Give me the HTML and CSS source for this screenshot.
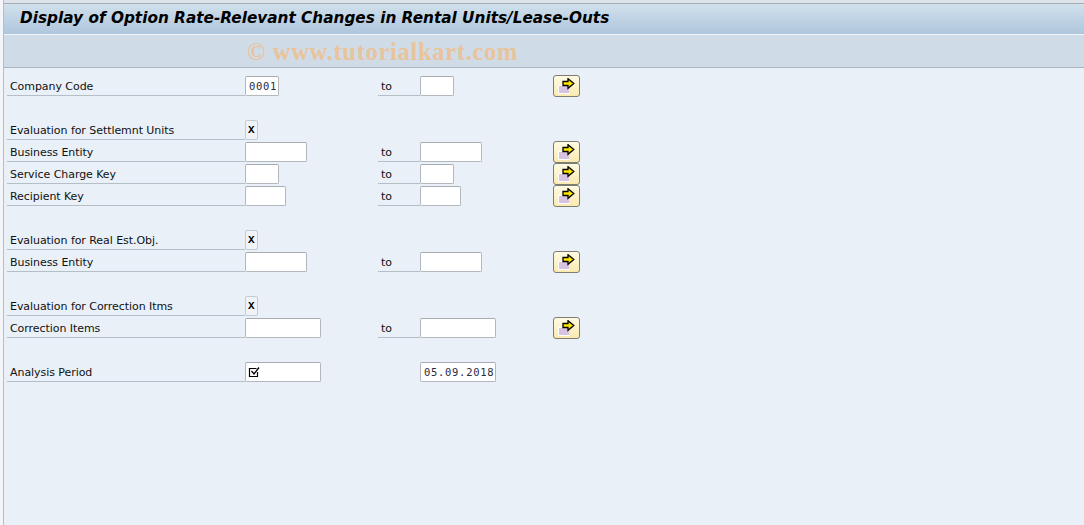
FILE: index.html
```html
<!DOCTYPE html>
<html lang="en">
<head>
  <meta charset="utf-8">
  <title>Display of Option Rate-Relevant Changes</title>
  <link rel="stylesheet" href="styles.css">
</head>
<body>
<svg class="defs" width="0" height="0">
  <symbol id="multi" viewBox="0 0 18 16">
    <rect x="0" y="7" width="12" height="9" fill="#fff"/>
    <rect x="1" y="8" width="10.500" height="7" fill="#d8c4e0"/>
    <path d="M5 3.500h5V.7l5.800 4.800L10 10.300V7.500H5z" fill="#ffe800" stroke="#000" stroke-width="1.300"/>
  </symbol>
</svg>

<div class="window">
  <header class="title-bar">Display of Option Rate-Relevant Changes in Rental Units/Lease-Outs</header>
  <div class="toolbar"><span class="watermark">© www.tutorialkart.com</span></div>

  <form class="selection">
    <label class="label">Company Code</label>
    <div class="cell"><span class="field w-4 mono">0001</span></div>
    <label class="label to">to</label>
    <div class="cell"><span class="field w-4"></span></div>
    <div class="cell"><button type="button" class="more"><svg width="18" height="16"><use href="#multi"/></svg></button></div>

    <div class="gap"></div>

    <label class="label">Evaluation for Settlemnt Units</label>
    <div class="cell"><span class="field w-1 check">X</span></div>
    <div class="blank"></div>

    <label class="label">Business Entity</label>
    <div class="cell"><span class="field w-8"></span></div>
    <label class="label to">to</label>
    <div class="cell"><span class="field w-8"></span></div>
    <div class="cell"><button type="button" class="more"><svg width="18" height="16"><use href="#multi"/></svg></button></div>

    <label class="label">Service Charge Key</label>
    <div class="cell"><span class="field w-4"></span></div>
    <label class="label to">to</label>
    <div class="cell"><span class="field w-4"></span></div>
    <div class="cell"><button type="button" class="more"><svg width="18" height="16"><use href="#multi"/></svg></button></div>

    <label class="label">Recipient Key</label>
    <div class="cell"><span class="field w-5"></span></div>
    <label class="label to">to</label>
    <div class="cell"><span class="field w-5"></span></div>
    <div class="cell"><button type="button" class="more"><svg width="18" height="16"><use href="#multi"/></svg></button></div>

    <div class="gap"></div>

    <label class="label">Evaluation for Real Est.Obj.</label>
    <div class="cell"><span class="field w-1 check">X</span></div>
    <div class="blank"></div>

    <label class="label">Business Entity</label>
    <div class="cell"><span class="field w-8"></span></div>
    <label class="label to">to</label>
    <div class="cell"><span class="field w-8"></span></div>
    <div class="cell"><button type="button" class="more"><svg width="18" height="16"><use href="#multi"/></svg></button></div>

    <div class="gap"></div>

    <label class="label">Evaluation for Correction Itms</label>
    <div class="cell"><span class="field w-1 check">X</span></div>
    <div class="blank"></div>

    <label class="label">Correction Items</label>
    <div class="cell"><span class="field w-10"></span></div>
    <label class="label to">to</label>
    <div class="cell"><span class="field w-10"></span></div>
    <div class="cell"><button type="button" class="more"><svg width="18" height="16"><use href="#multi"/></svg></button></div>

    <div class="gap"></div>

    <label class="label">Analysis Period</label>
    <div class="cell"><span class="field w-10"><svg class="tick" width="12" height="12" viewBox="0 0 12 12"><path d="M9.500 6v4.500h-8v-8h7" fill="none" stroke="#000" stroke-width="1.200"/><path d="M3.500 5l2.500 3L11 1.500" fill="none" stroke="#000" stroke-width="1.300"/></svg></span></div>
    <div></div>
    <div class="cell"><span class="field w-10 mono">05.09.2018</span></div>
    <div></div>
  </form>
</div>
</body>
</html>
```

FILE: styles.css
```css
html, body {
    height: 100%;
}

body {
    margin: 0;
    overflow: hidden;
    background-color: #f3f5f9;
    color: #111;
    font-family: "DejaVu Sans", "Liberation Sans", sans-serif;
    font-size: 11px;
}

.defs {
    position: absolute;
}

.window {
    box-sizing: border-box;
    height: 525px;
    margin-left: 3px;
    padding-top: 3px;
    border-left: 1px solid #b4bfc9;
    background: linear-gradient(#dfe3ea 0, #dfe3ea 3px, #e9f0f7 3px);
}

.title-bar {
    box-sizing: border-box;
    height: 32px;
    padding: 5px 0 0 16px;
    border-top: 1px solid #a3adb8;
    border-bottom: 1px solid #f0f5f9;
    background: linear-gradient(#d1e0ec, #aec6dd);
    color: #000;
    font-size: 15.300px;
    font-weight: bold;
    font-style: italic;
    white-space: nowrap;
}

.toolbar {
    box-sizing: border-box;
    height: 33px;
    padding: 2px 0 0 243px;
    border-bottom: 1px solid #a9b5c0;
    background-color: #cfdce7;
}

.watermark {
    display: block;
    color: #e9c39b;
    font-family: "Liberation Serif", serif;
    font-size: 24.500px;
    font-weight: bold;
    line-height: 30px;
    letter-spacing: 0.700px;
    white-space: nowrap;
}

.selection {
    display: grid;
    grid-template-columns: 238px 133px 42px 133px 30px;
    grid-auto-rows: 22px;
    padding: 8px 0 0 3px;
}

.label {
    box-sizing: border-box;
    height: 20px;
    padding: 4px 0 0 3px;
    border-bottom: 1px solid #b5bfc8;
    letter-spacing: -0.060px;
    white-space: nowrap;
}

.gap {
    grid-column: 1 / -1;
}

.blank {
    grid-column: 3 / -1;
}

.cell {
    display: flex;
    align-items: flex-start;
}

.field {
    box-sizing: border-box;
    display: block;
    height: 20px;
    padding: 3px 0 0 3px;
    border: 1px solid #b2b8bd;
    border-top-color: #a6acb2;
    border-radius: 2px;
    background-color: #fff;
}

.mono {
    color: #2b2b40;
    font-family: "DejaVu Sans Mono", monospace;
    font-size: 10.500px;
    letter-spacing: 0.700px;
}

.check {
    padding-left: 2px;
    border-color: #c4ccd3;
    background-color: #f0f4f8;
    color: #000;
    font-family: "Liberation Mono", monospace;
    font-size: 11px;
    font-weight: bold;
}

.tick {
    display: block;
    margin-left: -1px;
}

.w-1 { width: 13px; }
.w-4 { width: 34px; }
.w-5 { width: 41px; }
.w-8 { width: 62px; }
.w-10 { width: 76px; }

.more {
    box-sizing: border-box;
    display: flex;
    align-items: center;
    justify-content: center;
    width: 27px;
    height: 22px;
    margin-top: -1px;
    padding: 0;
    border: 1px solid #7d7d74;
    border-radius: 3px;
    background: linear-gradient(#fffbe4, #fbe9ae);
}
```
